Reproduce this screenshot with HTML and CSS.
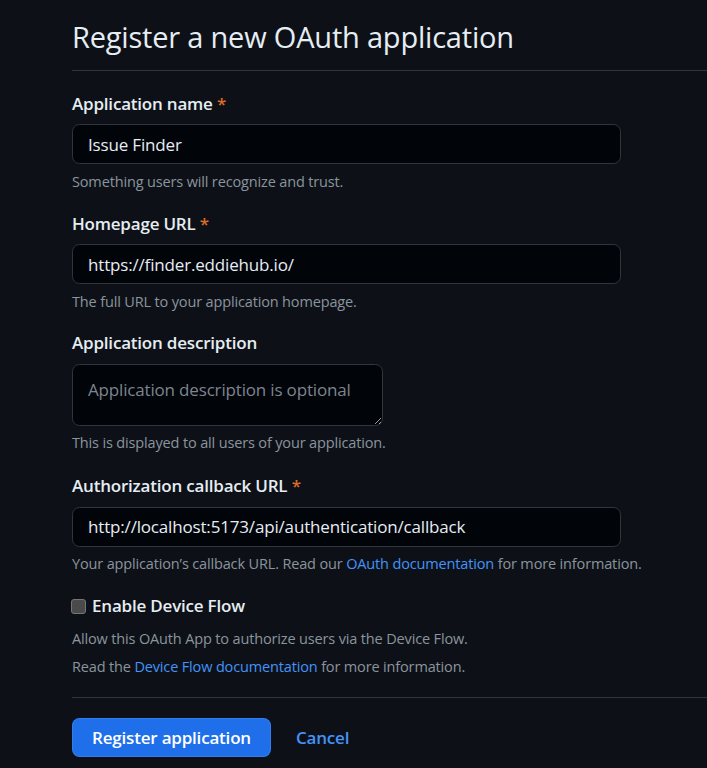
FILE: index.html
```html
<!DOCTYPE html>
<html lang="en">
<head>
<meta charset="utf-8">
<title>Register a new OAuth application</title>
<link rel="stylesheet" href="styles.css">
</head>
<body>
<main class="page">
  <div class="subhead">
    <h1 class="subhead-heading">Register a new OAuth application</h1>
  </div>
  <form class="form">
    <div class="form-group">
      <label class="form-label" for="name">Application name <span class="req">*</span></label>
      <input class="form-control" id="name" type="text" value="Issue Finder">
      <p class="note note-hint">Something users will recognize and trust.</p>
    </div>
    <div class="form-group">
      <label class="form-label" for="url">Homepage URL <span class="req">*</span></label>
      <input class="form-control" id="url" type="text" value="https://finder.eddiehub.io/">
      <p class="note note-hint">The full URL to your application homepage.</p>
    </div>
    <div class="form-group">
      <label class="form-label" for="desc">Application description</label>
      <textarea class="form-control textarea" id="desc" placeholder="Application description is optional"></textarea>
      <p class="note note-hint">This is displayed to all users of your application.</p>
    </div>
    <div class="form-group group-callback">
      <label class="form-label" for="cb">Authorization callback URL <span class="req">*</span></label>
      <input class="form-control" id="cb" type="text" value="http://localhost:5173/api/authentication/callback">
      <p class="note note-hint">Your application’s callback URL. Read our <a class="link" href="#">OAuth documentation</a> for more information.</p>
    </div>
    <div class="form-checkbox">
      <label class="check-label"><input class="check" type="checkbox"> Enable Device Flow</label>
      <p class="note note-first">Allow this OAuth App to authorize users via the Device Flow.</p>
      <p class="note note-second">Read the <a class="link" href="#">Device Flow documentation</a> for more information.</p>
    </div>
    <div class="actions">
      <button class="btn-primary" type="button">Register application</button>
      <a class="cancel" href="#">Cancel</a>
    </div>
  </form>
</main>
</body>
</html>
```
FILE: styles.css
```css
html, body {
  margin: 0;
  padding: 0;
  background: #0d1117;
  color-scheme: dark;
}
body {
  font-family: "Open Sans", "Noto Sans", sans-serif;
  color: #e6edf3;
  overflow: hidden;
}
.page {
  padding-left: 72px;
  padding-top: 14px;
}
.subhead {
  border-bottom: 1px solid #30363d;
  padding-bottom: 11px;
}
.subhead-heading {
  margin: 0;
  font-size: 29px;
  line-height: 45px;
  font-weight: 400;
  letter-spacing: -0.2px;
  color: #e6edf3;
}
.form {
  padding-top: 2.5px;
}
.form-group {
  margin: 17.25px 0;
}
.group-callback {
  margin-top: 18.5px;
}
.form-label {
  display: block;
  font-size: 17px;
  line-height: 26px;
  font-weight: 600;
  letter-spacing: -0.2px;
  margin-bottom: 7.5px;
}
.req {
  color: #db6d28;
}
.form-control {
  display: block;
  box-sizing: border-box;
  width: 549px;
  height: 40px;
  padding: 6px 15px;
  font-family: inherit;
  font-size: 17px;
  line-height: 26px;
  letter-spacing: -0.17px;
  color: #e6edf3;
  background: #010409;
  border: 1px solid #30363d;
  border-radius: 7.5px;
  outline: none;
}
.textarea {
  width: 311px;
  height: 62px;
  padding-top: 12px;
  resize: vertical;
}
.textarea::placeholder {
  color: #7d8590;
}
.note {
  margin: 0;
  font-size: 14.5px;
  line-height: 22.5px;
  letter-spacing: -0.15px;
  color: #8b949e;
}
.note-hint {
  margin-top: 6.5px;
}
.link {
  color: #4493f8;
  text-decoration: none;
}
.form-checkbox {
  margin: 17.5px 0 0;
}
.check-label {
  display: flex;
  align-items: center;
  gap: 6px;
  font-size: 17px;
  line-height: 26px;
  font-weight: 600;
  letter-spacing: -0.2px;
}
.check {
  appearance: none;
  -webkit-appearance: none;
  box-sizing: border-box;
  width: 15px;
  height: 15px;
  margin: 0 0 0 -1px;
  background: #4a4a4a;
  border: 1px solid #767676;
  border-radius: 3px;
}
.note-first {
  margin-top: 9px;
}
.note-second {
  margin-top: 5.5px;
}
.actions {
  margin-top: 18.5px;
  border-top: 1px solid #30363d;
  padding-top: 20px;
  display: flex;
  align-items: center;
  gap: 25px;
}
.btn-primary {
  box-sizing: border-box;
  width: 199px;
  height: 39px;
  border: 1px solid rgba(240, 246, 252, 0.1);
  border-radius: 7.5px;
  background: #1f6feb;
  color: #ffffff;
  font-family: inherit;
  font-size: 17px;
  font-weight: 600;
  letter-spacing: -0.2px;
  padding: 0;
}
.cancel {
  color: #4493f8;
  text-decoration: none;
  font-size: 17px;
  font-weight: 600;
  letter-spacing: -0.2px;
}
```
